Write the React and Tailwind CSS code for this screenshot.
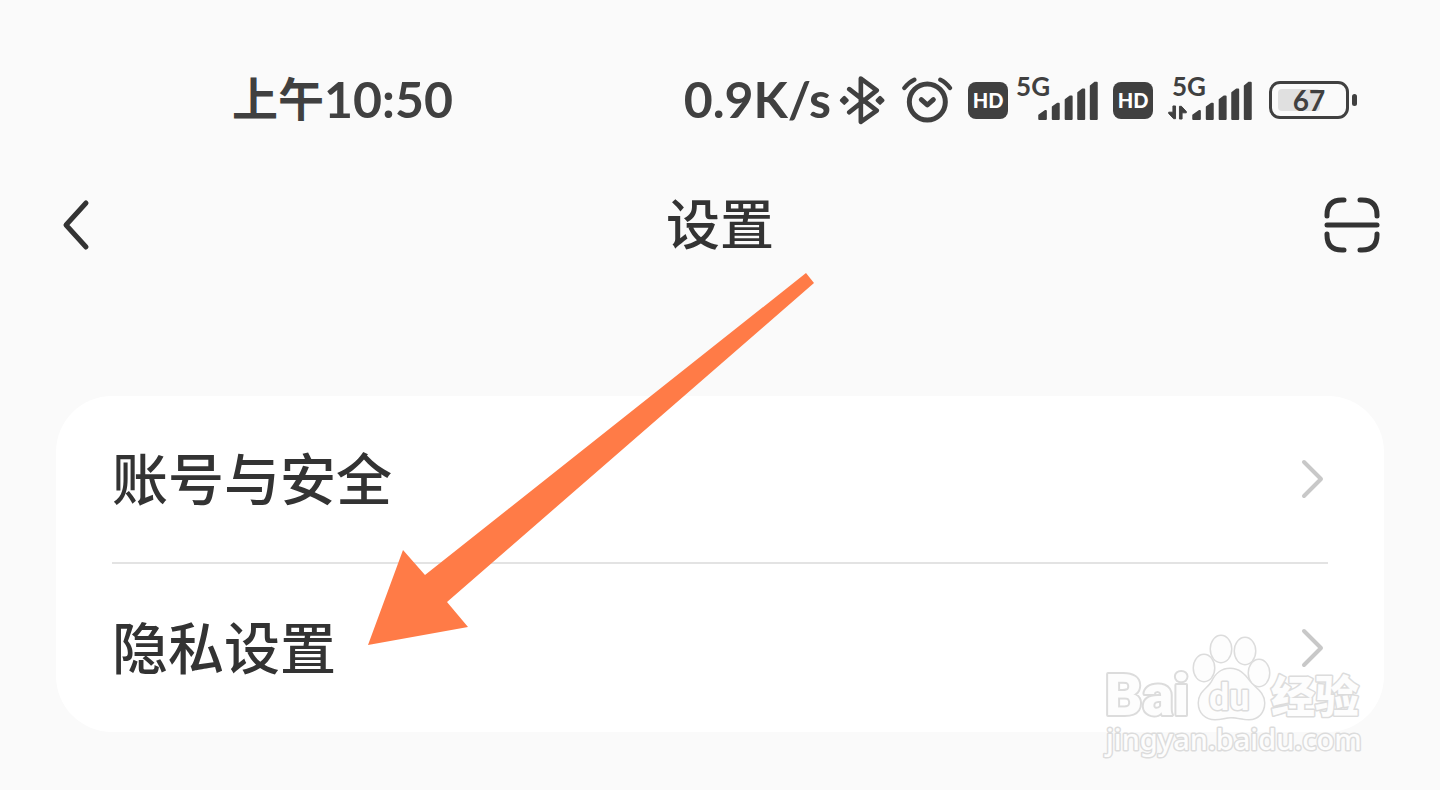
import React from 'react';

const CJK = "font-['Noto_Sans_CJK_SC',sans-serif]";
const LATIN = "font-['Lato','Noto_Sans_CJK_SC',sans-serif]";

const ITEMS = [
  { id: 'account', label: '账号与安全' },
  { id: 'privacy', label: '隐私设置' },
];

function BluetoothIcon() {
  return (
    <svg viewBox="0 0 142 150" className="h-[50px] w-[47px]" fill="none" aria-hidden="true">
      <path
        d="M31 42 L114 107 L66 141 L66 10 L114 46 L31 112"
        stroke="currentColor"
        strokeWidth="14"
        strokeLinecap="round"
        strokeLinejoin="round"
      />
      <path d="M16 67 L25 76 L16 85 L7 76 Z M124 67 L133 76 L124 85 L115 76 Z" fill="currentColor" stroke="currentColor" strokeWidth="9" strokeLinejoin="round" />
    </svg>
  );
}

function AlarmIcon() {
  return (
    <svg viewBox="0 0 156 150" className="h-[50px] w-[52px]" fill="none" stroke="currentColor" strokeWidth="15" strokeLinecap="round" strokeLinejoin="round" aria-hidden="true">
      <circle cx="79" cy="81" r="54" />
      <path d="M61 74 L79 90 L97 74" />
      <path d="M10 39 Q24 21 40 14 M118 14 Q134 21 147 39" strokeWidth="13" />
    </svg>
  );
}

function SignalBars() {
  return (
    <svg viewBox="0 0 180 118" className="h-[39px] w-[60px]" fill="currentColor" stroke="currentColor" strokeWidth="6" strokeLinejoin="round" aria-hidden="true">
      <path d="M3 104 L21 91 H23 V115 H3 Z" />
      <path d="M44 79 L58 69 H62 V115 H44 Z" />
      <path d="M83 57 L96 47 H101 V115 H83 Z" />
      <path d="M121 36 L134 26 H139 V115 H121 Z" />
      <path d="M159 15 L172 5 H177 V115 H159 Z" />
    </svg>
  );
}

function DataArrows() {
  return (
    <svg viewBox="0 0 58 46" className="h-[15px] w-[19px]" fill="currentColor" stroke="currentColor" strokeWidth="3" strokeLinejoin="round" aria-hidden="true">
      <path d="M15 3 H23 V42 H17 L2 26 V22 H15 Z" />
      <path d="M43 43 H35 V4 H41 L56 20 V24 H43 Z" />
    </svg>
  );
}

function HdBadge() {
  return (
    <span className="flex h-[37px] w-10 items-center justify-center rounded-lg bg-[#404040] text-xl leading-none font-black text-white">
      HD
    </span>
  );
}

function Battery({ level }) {
  return (
    <div className="flex items-center gap-[3px]">
      <div className="relative flex h-[38px] w-20 items-center justify-center rounded-[11px] border-3 border-[#404040]">
        <div className="absolute inset-y-[5px] left-[6px] right-[6px]">
          <div className="h-full rounded-sm bg-[#e0e0e0]" style={{ width: `${level}%` }} />
        </div>
        <span className="relative text-[28px] leading-none">{level}</span>
      </div>
      <div className="h-3 w-[5px] rounded-sm bg-[#404040]" />
    </div>
  );
}

function StatusBar() {
  return (
    <div className={`flex h-[100px] items-center justify-between pr-[83px] pl-[232px] font-bold text-[#404040] ${LATIN}`}>
      <div className="flex items-center leading-none">
        <span className={`pb-2 text-[46px] ${CJK}`}>上午</span>
        <span className="pb-0.5 text-[50px]">10:50</span>
      </div>
      <div className="flex items-center gap-[17px]">
        <div className="flex items-center gap-[15px]">
          <div className="flex items-center gap-2">
            <span className="pb-0.5 text-[50px] leading-none">0.9K/s</span>
            <BluetoothIcon />
          </div>
          <AlarmIcon />
          <div className="flex items-center gap-2">
            <HdBadge />
            <div className="flex h-12 items-end pb-1">
              <span className="-mr-3 self-start text-[26px] leading-5">5G</span>
              <SignalBars />
            </div>
          </div>
          <HdBadge />
          <div className="flex h-12 items-end pb-1">
            <div className="-mr-[14px] flex flex-col justify-between self-stretch">
              <span className="pl-1 text-[26px] leading-5">5G</span>
              <DataArrows />
            </div>
            <SignalBars />
          </div>
        </div>
        <Battery level={67} />
      </div>
    </div>
  );
}

function Header() {
  return (
    <header className="grid grid-cols-[1fr_auto_1fr] items-center px-[60px] text-[#333]">
      <button type="button" aria-label="返回" className="justify-self-start">
        <svg viewBox="0 0 32 54" className="h-[54px] w-8" fill="none" stroke="currentColor" strokeWidth="5" strokeLinecap="round" strokeLinejoin="round">
          <path d="M26 5 L6 27 L26 49" />
        </svg>
      </button>
      <h1 className="pb-1.5 text-[54px] leading-[74px] font-medium">设置</h1>
      <button type="button" aria-label="扫一扫" className="justify-self-end">
        <svg viewBox="0 0 56 56" className="h-14 w-14" fill="none" stroke="currentColor" strokeWidth="5" strokeLinecap="round">
          <path d="M3 19 V18 Q3 3 18 3 H20 M36 3 H38 Q53 3 53 18 V19" />
          <path d="M3 37 V38 Q3 53 18 53 H20 M36 53 H38 Q53 53 53 38 V37" />
          <path d="M3 28 H53" />
        </svg>
      </button>
    </header>
  );
}

function PointerArrow() {
  return (
    <svg viewBox="0 0 446 373" className="pointer-events-none absolute top-[272px] left-[368px] h-[373px] w-[446px]" fill="#ff7b47" aria-hidden="true">
      <path d="M0 373 L35 278 L57 303 L438 1 L446 11 L79 330 L100 355 Z" />
    </svg>
  );
}

function Watermark() {
  return (
    <svg viewBox="0 0 270 130" className="pointer-events-none absolute top-[630px] right-[70px] h-[130px] w-[270px] [paint-order:stroke]" fill="#fdfdfd" stroke="#dcdcdc" strokeWidth="4" strokeLinejoin="round">
      <text x="5" y="85" className="font-['Roboto',sans-serif] text-[58px] font-black">Bai</text>
      <g strokeWidth="3">
        <ellipse cx="104" cy="38" rx="10" ry="13" />
        <ellipse cx="121" cy="19" rx="10" ry="13" />
        <ellipse cx="145" cy="21" rx="10" ry="13" />
        <ellipse cx="159" cy="43" rx="10" ry="13" />
        <path d="M130 39 C121 39 116 44 112 52 C108 59 99 62 99 73 C99 83 106 89 115 89 C121 89 126 87 131 87 C138 87 142 89 149 89 C158 89 164 82 164 73 C164 62 154 58 149 51 C144 44 139 39 130 39 Z" />
        <text x="109" y="80" className="font-['Roboto',sans-serif] text-[36px] font-bold">du</text>
        <text x="171" y="83" className="font-['Noto_Sans_CJK_SC',sans-serif] text-[44px] font-black">经验</text>
        <text x="6" y="120" className="font-['Noto_Sans',sans-serif] text-[29px] font-medium">jingyan.baidu.com</text>
      </g>
    </svg>
  );
}

export default function App() {
  return (
    <div className={`relative min-h-screen overflow-hidden bg-[#fafafa] pt-[50px] ${CJK}`}>
      <StatusBar />
      <div className="pt-[35px]">
        <Header />
      </div>

      <main className="mx-14 mt-[131px] rounded-[56px] bg-white px-14">
        <ul>
          {ITEMS.map((item) => (
            <li key={item.id} className="h-[168px] border-b-2 border-[#e3e3e3] last:border-b-0">
              <a href={`#${item.id}`} className="flex h-full items-center justify-between text-[#333]">
                <span className="pb-1.5 text-[56px] leading-[80px] font-medium">{item.label}</span>
                <svg viewBox="0 0 32 42" className="h-[42px] w-8 text-[#c8c8c8]" fill="none" stroke="currentColor" strokeWidth="4" strokeLinecap="round" strokeLinejoin="round" aria-hidden="true">
                  <path d="M8 4 L25 21 L8 38" />
                </svg>
              </a>
            </li>
          ))}
        </ul>
      </main>

      <PointerArrow />
      <Watermark />
    </div>
  );
}
